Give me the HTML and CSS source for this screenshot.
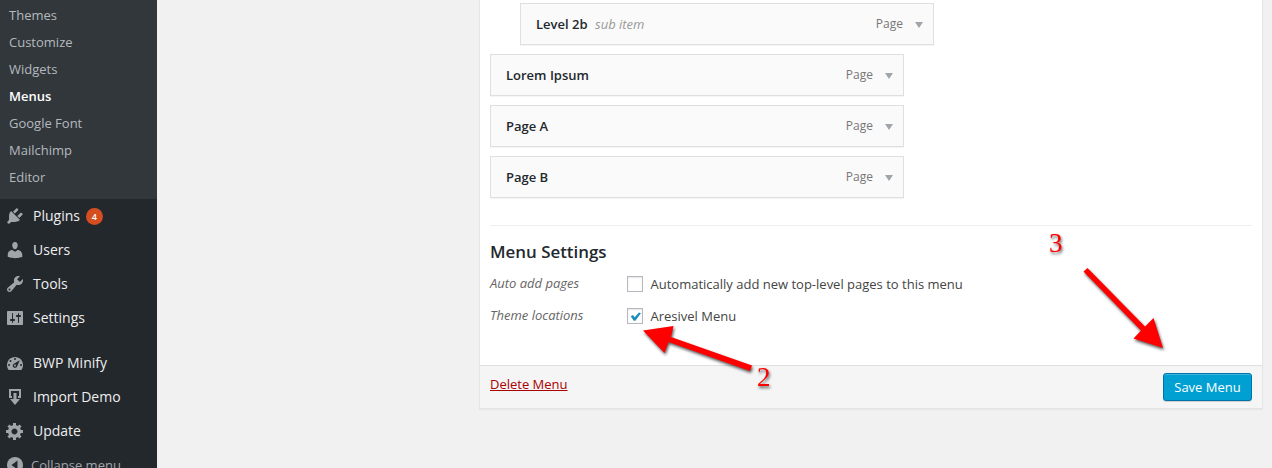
FILE: index.html
```html
<!DOCTYPE html>
<html lang="en">
<head>
<meta charset="utf-8">
<title>Menus</title>
<link rel="stylesheet" href="styles.css">
</head>
<body>
<div class="page">
  <nav class="sidebar">
    <ul class="submenu">
      <li>Themes</li><li>Customize</li><li>Widgets</li><li class="current">Menus</li><li>Google Font</li><li>Mailchimp</li><li>Editor</li>
    </ul>
    <ul class="mainmenu">
      <li><svg viewBox="0 0 20 20"><path d="M13.11 4.36L9.87 7.6 8 5.73l3.24-3.24c.35-.34 1.05-.2 1.56.32.52.51.66 1.21.31 1.55zm-8 1.77l.91-1.12 9.01 9.01-1.19.84c-.71.71-2.63 1.16-3.82 1.16H6.14L4.9 17.26c-.59.59-1.54.59-2.12 0-.59-.58-.59-1.53 0-2.12l1.24-1.24v-3.88c0-1.13.4-3.19 1.09-3.89zm7.26 3.97l3.24-3.24c.34-.35 1.04-.21 1.55.31.52.51.66 1.21.31 1.55l-3.24 3.25z"/></svg><span class="name">Plugins</span><span class="count">4</span></li>
      <li><svg viewBox="0 0 20 20"><path d="M10 9.25c-2.27 0-2.73-3.44-2.73-3.44C7 4.02 7.82 2 9.97 2c2.16 0 2.98 2.02 2.71 3.81 0 0-.41 3.44-2.68 3.44zm0 2.57L12.72 10c2.39 0 4.52 2.33 4.52 4.53v2.49s-3.65 1.13-7.24 1.13c-3.65 0-7.24-1.13-7.24-1.13v-2.49c0-2.25 1.94-4.48 4.47-4.48z"/></svg><span class="name">Users</span></li>
      <li><svg viewBox="0 0 20 20"><path fill-rule="evenodd" d="M16.68 9.77c-1.34 1.34-3.3 1.67-4.95.99l-5.41 6.52c-.99.99-2.59.99-3.58 0s-.99-2.59 0-3.57l6.52-5.42c-.68-1.65-.35-3.61.99-4.95 1.28-1.28 3.12-1.62 4.72-1.06l-2.89 2.89 2.82 2.82 2.86-2.87c.53 1.58.18 3.39-1.08 4.65zM3.81 16.21c.4.39 1.04.39 1.43 0 .4-.4.4-1.04 0-1.43-.39-.4-1.03-.4-1.43 0-.39.39-.39 1.03 0 1.43z"/></svg><span class="name">Tools</span></li>
      <li><svg viewBox="0 0 20 20"><path fill-rule="evenodd" d="M18 16V4c0-.55-.45-1-1-1H3c-.55 0-1 .45-1 1v12c0 .55.45 1 1 1h14c.55 0 1-.45 1-1zM8 11h1c.55 0 1 .45 1 1s-.45 1-1 1H8v1.5c0 .28-.22.5-.5.5s-.5-.22-.5-.5V13H6c-.55 0-1-.45-1-1s.45-1 1-1h1V5.5c0-.28.22-.5.5-.5s.5.22.5.5V11zm5-2h-1c-.55 0-1-.45-1-1s.45-1 1-1h1V5.5c0-.28.22-.5.5-.5s.5.22.5.5V7h1c.55 0 1 .45 1 1s-.45 1-1 1h-1v5.5c0 .28-.22.5-.5.5s-.5-.22-.5-.5V9z"/></svg><span class="name">Settings</span></li>
      <li class="group"><svg viewBox="0 0 20 20"><path d="M3.76 17h12.48c1.1-1.37 1.76-3.11 1.76-5 0-4.42-3.58-8-8-8s-8 3.58-8 8c0 1.89.66 3.63 1.76 5z"/><g class="cut"><circle cx="10" cy="6" r="1"/><circle cx="5.5" cy="8" r="1"/><circle cx="4" cy="12" r="1"/><circle cx="16" cy="12" r="1"/><path d="M14.8 7.2l-2.6 6c-.7 1.7-2.6 2.2-3.8 1-1.2-1.2-.7-3.1.9-3.8z"/></g><circle cx="10" cy="12.6" r="1"/></svg><span class="name">BWP Minify</span></li>
      <li><svg viewBox="0 0 20 20"><path d="M4 2h12v9h-3V9h1V4H6v5h1v2H4zM8.500 6h3v6H15l-5 6-5-6h3.500z"/></svg><span class="name">Import Demo</span></li>
      <li><svg viewBox="0 0 20 20"><path fill-rule="evenodd" d="M18 12h-2.180c-.17.7-.44 1.350-.81 1.930l1.540 1.540-2.100 2.100-1.540-1.540c-.58.36-1.230.63-1.910.79V19H8v-2.180c-.68-.16-1.330-.43-1.910-.79l-1.540 1.540-2.120-2.120 1.540-1.540c-.36-.58-.63-1.230-.79-1.910H1V9.030h2.170c.16-.7.44-1.350.8-1.940L2.430 5.550l2.100-2.100 1.540 1.540c.58-.37 1.240-.64 1.930-.81V2h3v2.180c.68.16 1.330.43 1.910.79l1.540-1.540 2.120 2.120-1.540 1.540c.36.59.64 1.240.8 1.940H18V12zm-8.500 1.500c1.660 0 3-1.340 3-3s-1.340-3-3-3-3 1.340-3 3 1.340 3 3 3z"/></svg><span class="name">Update</span></li>
      <li class="collapse"><svg viewBox="0 0 20 20"><circle cx="10" cy="10" r="8"/><path class="cut" d="M12.500 5.500v9L6.500 10z"/></svg>Collapse menu</li>
    </ul>
  </nav>
  <main class="content">
    <section class="panel">
      <div class="panel-body">
        <ul class="items">
          <li class="item sub"><b>Level 2b</b><i>sub item</i><span>Page</span><svg class="caret" viewBox="0 0 8 6"><path d="M0 0h8L4 6z"/></svg></li>
          <li class="item"><b>Lorem Ipsum</b><span>Page</span><svg class="caret" viewBox="0 0 8 6"><path d="M0 0h8L4 6z"/></svg></li>
          <li class="item"><b>Page A</b><span>Page</span><svg class="caret" viewBox="0 0 8 6"><path d="M0 0h8L4 6z"/></svg></li>
          <li class="item"><b>Page B</b><span>Page</span><svg class="caret" viewBox="0 0 8 6"><path d="M0 0h8L4 6z"/></svg></li>
        </ul>
        <div class="settings">
          <h3>Menu Settings</h3>
          <div class="setting"><em>Auto add pages</em><span class="box"></span><label>Automatically add new top-level pages to this menu</label></div>
          <div class="setting"><em>Theme locations</em><span class="box"><svg viewBox="0 0 14 14"><path d="M2.700 7.200l2.300-1.100 1.700 2.200 4.200-4.900 2 .8-5.500 7.600H5.800z"/></svg></span><label>Aresivel Menu</label></div>
        </div>
      </div>
      <footer class="panel-footer"><a class="delete">Delete Menu</a><button class="save">Save Menu</button></footer>
    </section>
  </main>
  <svg class="annotations" viewBox="0 0 1272 468">
    <path d="M643 330.500L673.500 326l-2.500 11 81 28.500-2 5.500-81.500-29-4 11z"/>
    <path d="M1087.500 268l57.500 58.500 8.500-8.500 9.500 30-29.500-9.500 7.500-8-57.500-59z"/>
    <text x="757" y="386">2</text>
    <text x="1049" y="252">3</text>
  </svg>
</div>
</body>
</html>
```
FILE: styles.css
```css
* { box-sizing: border-box; }
body { margin: 0; background: #f1f1f1; font: 13px "Open Sans", sans-serif; color: #444; }
ul { list-style: none; margin: 0; padding: 0; }
.page { position: relative; display: flex; width: 1272px; height: 468px; overflow: hidden; }
.sidebar { flex: none; width: 157px; height: 468px; overflow: hidden; background: #23282d; }
.submenu { height: 199px; padding: 2px 9px 0; background: #32373c; color: #b4b9be; }
.submenu li { height: 27px; line-height: 27px; }
.submenu .current { color: #fff; font-weight: 600; }
.mainmenu li { display: flex; align-items: center; height: 34px; padding-left: 5px; color: #eee; font-size: 14px; white-space: nowrap; }
.mainmenu svg { flex: none; width: 20px; height: 20px; margin-right: 8px; fill: #a0a5aa; }
.mainmenu .name { padding-bottom: 2px; }
.mainmenu .cut { fill: #23282d; }
.mainmenu .group { margin-top: 11px; }
.mainmenu .collapse { color: #a0a5aa; font-size: 13px; }
.mainmenu .collapse svg { margin-right: 6px; }
.count { width: 17px; height: 17px; margin-left: 6px; border-radius: 50%; background: #d54e21; color: #fff; font-size: 9px; font-weight: 600; line-height: 17px; text-align: center; }
.content { flex: 1; padding: 0 9px 0 322px; }
.panel { height: 409px; border: 1px solid #e5e5e5; border-top: 0; background: #fff; box-shadow: 0 1px 1px rgba(0,0,0,.04); }
.panel-body { height: 365px; padding: 3px 10px 0; }
.items { display: flex; flex-direction: column; gap: 9px; }
.item { display: flex; align-items: center; width: 414px; height: 42px; padding: 0 10px 0 15px; border: 1px solid #dfdfdf; background: #fafafa; box-shadow: 0 1px 1px rgba(0,0,0,.04); }
.item.sub { margin-left: 30px; }
.item b { color: #23282d; font-weight: 600; }
.item i { margin-left: 7.5px; color: #999; }
.item span { margin-left: auto; padding-bottom: 2px; color: #777; font-size: 12px; }
.caret { width: 8px; height: 6px; margin: 2px 0 0 12px; fill: #a0a5aa; }
.settings { margin-top: 27px; padding-top: 14px; border-top: 1px solid #eee; }
h3 { margin: 0; color: #23282d; font-size: 16.9px; font-weight: 600; line-height: 24px; }
.setting { display: flex; align-items: center; height: 32px; }
.settings h3 + .setting { margin-top: 4px; }
.setting em { width: 137px; padding-bottom: 2px; color: #666; }
.box { width: 16px; height: 16px; margin-right: 7.5px; border: 1px solid #b4b9be; background: #fff; box-shadow: inset 0 1px 2px rgba(0,0,0,.1); }
.box svg { display: block; width: 14px; height: 14px; fill: #1e8cbe; }
.panel-footer { display: flex; justify-content: space-between; height: 43px; padding: 7px 10px 0; border-top: 1px solid #dfdfdf; background: #f5f5f5; }
.delete { height: 22px; line-height: 22px; color: #a00; text-decoration: underline; }
.save { width: 89px; height: 28px; padding: 0; border: 1px solid #0073aa; border-radius: 3px; background: #00a0d2; color: #fff; font: 13px "Open Sans", sans-serif; box-shadow: inset 0 1px 0 rgba(120,200,230,.5), 0 1px 0 rgba(0,0,0,.15); }
.annotations { position: absolute; inset: 0; width: 1272px; height: 468px; fill: #f00; filter: drop-shadow(1.5px 2px 1.5px rgba(0,0,0,.65)); }
.annotations text { font: 27px "Liberation Serif", serif; }
```
